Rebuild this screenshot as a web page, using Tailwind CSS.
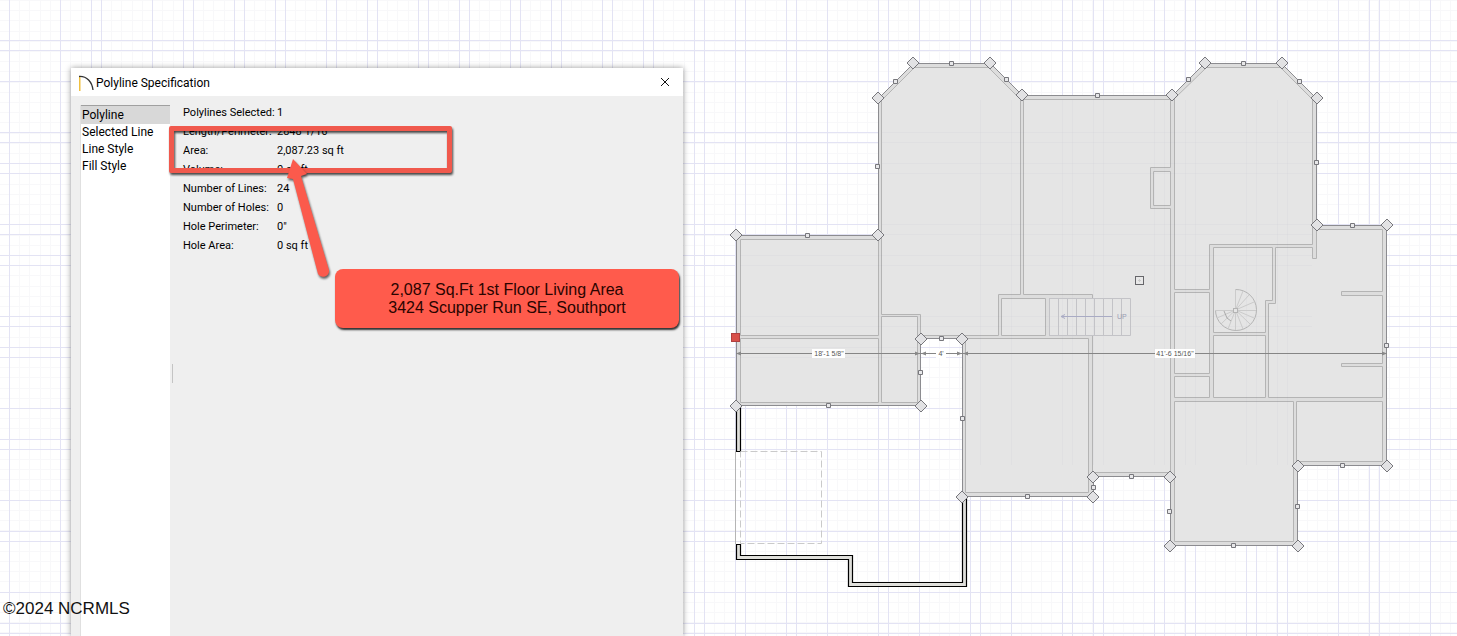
<!DOCTYPE html>
<html lang="en">
<head>
    <meta charset="UTF-8">
    <meta name="viewport" content="width=device-width, initial-scale=1.0">
    <title>Polyline Specification</title>
    <script src="https://cdn.jsdelivr.net/npm/@tailwindcss/browser@4"></script>
</head>
<body class="relative flex h-screen overflow-hidden bg-white font-[Roboto,sans-serif] text-black">
    <!-- Floor plan canvas -->
    <svg class="absolute inset-0 h-full w-full" viewBox="0 0 1457 636" preserveAspectRatio="xMinYMin slice" role="img" aria-label="First floor plan">
        <g id="minor" stroke="#f8f8fa"></g>
        <g id="major" stroke="#e3e3f4"></g>

        <!-- Garage walls -->
        <g fill="#dfdfdb" stroke="#000" stroke-width="1.2">
            <path d="M736.5 405V451.5H740.5V405Z"/>
            <path d="M736.5 544.5V559.5H848.5V586.5H966.5V497H962.5V582.5H852.5V555.5H740.5V544.5Z"/>
        </g>
        <path d="M735.5 451V544" stroke="#b5b5b5"/>
        <path d="M740.5 451.5H821.5V543.5H740.5Z" fill="none" stroke="#cacaca" stroke-dasharray="7 3"/>

        <!-- Living area polyline -->
        <path d="M736.5 235.5H878.5V98.5L913.5 63.5H990.5L1022.5 95.5H1172.5L1204.5 63.5H1281.5L1316.5 98.5V225.5H1386.5V465.5H1297.5V545.5H1170.5V476.5H1093.5V496.5H962.5V338.5H920.5V405.5H736.5Z" fill="#dddddd" stroke="#8c8c90"/>

        <!-- Rooms -->
        <g fill="#e5e5e5" stroke="#b4b4b4">
            <path d="M740.5 239.5H878.5V335.5H740.5Z"/>
            <path d="M740.5 338.5H878.5V402.5H740.5Z"/>
            <path d="M881.5 316.5H917.5V402.5H881.5Z"/>
            <path d="M881.5 100.5L914.5 67.5H988.5L1020.5 99.5V294.5H998.5V335.5H920.5V314.5H881.5Z"/>
            <path d="M1023.5 99.5H1170.5V167.5H1150.5V208.5H1170.5V472.5H1092.5V335.5H1049.5V298.5H1092.5V294.5H1023.5Z"/>
            <path d="M1153.5 171.5H1170.5V205.5H1153.5Z"/>
            <path d="M1001.5 298.5H1045.5V335.5H1001.5Z"/>
            <path d="M965.5 338.5H1088.5V492.5H965.5Z"/>
            <path d="M1174.5 98.5L1206.5 67.5H1280.5L1312.5 99.5V244.5H1209.5V289.5H1174.5Z"/>
            <path d="M1174.5 292.5H1209.5V373.5H1174.5Z"/>
            <path d="M1174.5 376.5H1209.5V397.5H1174.5Z"/>
            <path d="M1213.5 247.5H1272.5V300.5H1265.5V332.5H1213.5Z"/>
            <path d="M1213.5 335.5H1265.5V397.5H1213.5Z"/>
            <path d="M1275.5 247.5H1312.5V258.5H1316.5V229.5H1382.5V291.5H1341.5V295.5H1382.5V363.5H1341.5V366.5H1382.5V397.5H1268.5V303.5H1275.5Z"/>
            <path d="M1174.5 401.5H1293.5V541.5H1174.5Z"/>
            <path d="M1296.5 401.5H1382.5V461.5H1296.5Z"/>
        </g>

        <!-- Grid seen through the fill -->
        <g id="overlay" stroke="#6060a0" stroke-opacity="0.03"></g>

        <!-- Stairs -->
        <g fill="none" stroke="#c3c3c7">
            <path d="M1049.5 298.5H1130.5V335.5H1049.5ZM1058.5 298V335M1067.5 298V335M1076.5 298V335M1085.5 298V335M1094.5 298V335M1103.5 298V335M1112.5 298V335M1121.5 298V335"/>
            <path d="M1061 316.5H1112M1061 316.5L1065 314.5M1061 316.5L1065 318.5" stroke="#a9abc4"/>
        </g>
        <text x="1117" y="319" font-family="Liberation Sans, sans-serif" font-size="7" fill="#9a9cb4">UP</text>

        <!-- Spiral stairs -->
        <g fill="none" stroke="#b4b4b4">
            <path d="M1235.5 289.5A20.5 20.5 0 1 1 1215.5 310"/>
            <path d="M1235.5 289V330M1215 310.5H1256M1235.5 310L1243 291M1235.5 310L1249 295M1235.5 310L1254 302M1235.5 310L1254 318M1235.5 310L1250 324M1235.5 310L1243 329M1235.5 310L1228 329M1235.5 310L1221 324M1235.5 310L1217 318" stroke="#cbcbcb"/>
            <path d="M1224 311L1227 318L1231 321" stroke="#aaaaaa"/>
            <rect x="1233.5" y="308.5" width="4" height="4" fill="#e5e5e5"/>
        </g>

        <!-- Dimension string -->
        <path d="M736 353.5H1387" stroke="#858585"/>
        <path d="M736 353.5L741 351.5V355.5ZM920 353.5L915 351.5V355.5ZM921 353.5L926 351.5V355.5ZM962 353.5L957 351.5V355.5ZM963 353.5L968 351.5V355.5ZM1387 353.5L1382 351.5V355.5Z" fill="#888888"/>
        <g fill="#ffffff">
            <rect x="812" y="349" width="33" height="9"/>
            <rect x="936" y="349" width="10" height="9"/>
            <rect x="1155" y="349" width="40" height="9"/>
        </g>
        <g font-family="Liberation Sans, sans-serif" font-size="7" fill="#555555" text-anchor="middle">
            <text x="829" y="356">18'-1 5/8"</text>
            <text x="941" y="356">4'</text>
            <text x="1175" y="356">41'-6 15/16"</text>
        </g>

        <!-- Edit handles -->
        <g id="corners" fill="#e2e2e4" stroke="#77777c"></g>
        <g id="mids" fill="#e8e8ea" stroke="#77777c"></g>
        <rect x="1135.5" y="276.5" width="8" height="8" fill="#e8e8e8" stroke="#66666a"/>
        <path d="M1138 280.5H1141M1139.5 279V282" stroke="#cccccc"/>
        <rect x="731.5" y="333.5" width="8" height="8" fill="#d8504a" stroke="#b04040"/>
    </svg>

    <!-- Dialog window -->
    <main class="relative mt-[68px] ml-[71px] flex w-[612px] flex-col bg-[#efefef] shadow-[0_0_6px_rgba(0,0,0,0.4)]">
        <header class="flex h-7 shrink-0 items-center bg-white pr-3 pl-2">
            <svg class="mt-1 h-5 w-4" viewBox="0 0 16 20" fill="none" aria-hidden="true">
                <path d="M0.5 2V17" stroke="#f0c040" stroke-width="2"/>
                <path d="M0 2.5C8 2 13 8 14 16" stroke="#333333" stroke-width="1.3"/>
            </svg>
            <h1 class="grow pt-[2px] pl-px text-xs">Polyline Specification</h1>
            <button type="button" aria-label="Close" class="p-px">
                <svg class="size-[10px]" viewBox="0 0 10 10" fill="none" stroke="#111111" aria-hidden="true"><path d="M1 1L9 9M9 1L1 9"/></svg>
            </button>
        </header>
        <div class="flex grow pt-[7px] pl-[9px]">
            <nav class="mt-[2px] flex w-[90px] flex-col border-l border-[#e0e0e0] bg-white text-xs leading-[17px]">
                <button type="button" class="border-t border-[#a0a0a0] bg-[#d8d8d8] pt-px pl-px text-left">Polyline</button>
                <button type="button" class="pl-px text-left">Selected Line</button>
                <button type="button" class="pl-px text-left">Line Style</button>
                <button type="button" class="pl-px text-left">Fill Style</button>
            </nav>
            <dl class="grid grid-cols-[94px_auto] content-start pl-[13px] text-[11px] leading-[19px] whitespace-nowrap">
                <dt>Polylines Selected:</dt><dd>1</dd>
                <dt>Length/Perimeter:</dt><dd>2848 1/16"</dd>
                <dt>Area:</dt><dd>2,087.23 sq ft</dd>
                <dt>Volume:</dt><dd>0 cu ft</dd>
                <dt>Number of Lines:</dt><dd>24</dd>
                <dt>Number of Holes:</dt><dd>0</dd>
                <dt>Hole Perimeter:</dt><dd>0"</dd>
                <dt>Hole Area:</dt><dd>0 sq ft</dd>
            </dl>
        </div>
        <div class="absolute top-[296px] left-[101px] h-[19px] w-px bg-[#c4c4c4]"></div>

        <!-- Markup on top of the dialog -->
        <div class="absolute top-[58px] left-[98px] h-[47px] w-[283px] rounded-[2px] border-[5px] border-[#f0594d] drop-shadow-[1px_2px_1px_rgba(0,0,0,0.7)]"></div>
        <svg class="absolute top-[88px] left-[209px] h-[124px] w-[56px] drop-shadow-[1px_2px_1px_rgba(0,0,0,0.6)]" viewBox="0 0 56 124" aria-hidden="true">
            <path d="M13 3L27 18L21 20L49 114A6 6 0 0 1 38 118L13 23L7 22Z" fill="#fb5a4c"/>
        </svg>
        <p class="absolute top-[201px] left-[264px] w-[344px] rounded-lg bg-[#ff5b4c] pt-3 pb-[11px] text-center font-['Liberation_Sans',sans-serif] text-base leading-[18px] text-[#2a0400] shadow-[1px_2px_2px_rgba(0,0,0,0.8)]">
            2,087 Sq.Ft 1st Floor Living Area<br>3424 Scupper Run SE, Southport
        </p>
    </main>

    <p class="absolute bottom-[17px] left-[3px] font-['Liberation_Sans',sans-serif] text-[17px] leading-5 text-[#111111]">©2024 NCRMLS</p>

    <script>
        const majorX = [9, 60, 91, 101, 152, 183, 193, 234, 244, 275, 285, 326, 336, 367, 377, 418, 428, 459, 469, 510, 520, 551, 561, 602, 612, 643, 653, 694, 704, 735, 745, 786, 796, 827, 878, 888, 919, 970, 980, 1011, 1062, 1072, 1093, 1103, 1154, 1164, 1185, 1195, 1246, 1256, 1277, 1287, 1338, 1369, 1379, 1430];
        const majorY = [40, 50, 81, 132, 142, 163, 173, 224, 234, 255, 265, 316, 326, 347, 357, 408, 439, 449, 500, 531, 541, 592, 623, 633];
        const corners = [[736, 235], [878, 235], [878, 98], [913, 63], [990, 63], [1022, 95], [1172, 95], [1205, 63], [1282, 63], [1317, 98], [1317, 225], [1387, 225], [1387, 466], [1298, 466], [1298, 546], [1170, 546], [1170, 477], [1093, 477], [1093, 497], [962, 497], [962, 339], [921, 339], [921, 406], [736, 406]];
        const mids = [[807, 235], [895, 81], [951, 63], [1006, 79], [1097, 95], [1188, 79], [1243, 63], [1299, 81], [1316, 162], [1352, 225], [1386, 345], [1342, 465], [1297, 506], [1233, 545], [1169, 511], [1131, 476], [1093, 487], [1027, 496], [962, 418], [941, 338], [920, 372], [828, 405], [877, 166]];

        function path(id, d) {
            document.getElementById(id).innerHTML = `<path d="${d}"/>`;
        }

        let minor = '';
        for (let i = 0; i < 143; i++) minor += `M${Math.round(9 + i * 10.22) + 0.5} 0V636`;
        for (let i = 0; i < 63; i++) minor += `M0 ${Math.round(i * 10.2) + 0.5}H1457`;
        path('minor', minor);

        path('major', majorX.map(x => `M${x + 0.5} 0V636`).join('') + majorY.map(y => `M0 ${y + 0.5}H1457`).join(''));
        path('overlay', majorX.filter(x => x > 970 && x < 1310).map(x => `M${x + 0.5} 100V465`).join('') + majorY.filter(y => y > 100 && y < 400).map(y => `M${y < 235 ? 882 : 740} ${y + 0.5}H${y > 326 ? 917 : 1312}`).join(''));
        path('corners', corners.map(([x, y]) => `M${x} ${y - 6}l6 6l-6 6l-6 -6Z`).join(''));
        path('mids', mids.map(([x, y]) => `M${x - 1.5} ${y - 1.5}h4v4h-4Z`).join(''));
    </script>
</body>
</html>
